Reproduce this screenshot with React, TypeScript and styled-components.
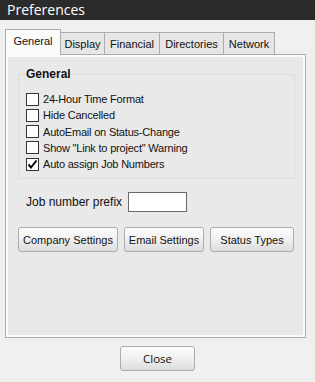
import styled, { createGlobalStyle } from "styled-components";

const GlobalStyle = createGlobalStyle`
  html, body {
    margin: 0;
    padding: 0;
    background: #f0f0f0;
  }
  * {
    box-sizing: border-box;
  }
`;

const Window = styled.div`
  width: 315px;
  height: 382px;
  background: #f0f0f0;
  display: flex;
  flex-direction: column;
  font-family: "Liberation Sans", Arial, sans-serif;
  font-size: 11px;
  color: #111;
`;

const TitleBar = styled.div`
  height: 20px;
  background: #2b2b2b;
  color: #fff;
  font-family: "Open Sans", "Noto Sans", sans-serif;
  font-size: 14px;
  line-height: 20px;
  padding-left: 7px;
`;

const Body = styled.div`
  padding: 9px 9px 0 5px;
  display: flex;
  flex-direction: column;
`;

const TabRow = styled.div`
  display: flex;
  align-items: flex-end;
  height: 26px;
  position: relative;
  z-index: 1;
  margin-bottom: -1px;
`;

const Tab = styled.div<{ $active?: boolean; $w: number }>`
  width: ${(p) => p.$w}px;
  height: ${(p) => (p.$active ? "26px" : "23px")};
  padding-top: 4px;
  margin-left: -1px;
  border: 1px solid #acacac;
  border-bottom: ${(p) => (p.$active ? "none" : "1px solid #acacac")};
  background: ${(p) => (p.$active ? "#fbfbfb" : "#e6e6e6")};
  line-height: 15px;
  text-align: center;
  &:first-child {
    margin-left: 0;
  }
`;

const Panel = styled.div`
  height: 284px;
  border: 1px solid #acacac;
  background: #e9e9e9;
  box-shadow: inset 0 0 0 2px #fbfbfb;
  padding: 12px 10px 0 12px;
  display: flex;
  flex-direction: column;
`;

const Group = styled.fieldset`
  margin: 0;
  height: 112px;
  border: 1px solid #dddddd;
  padding: 10px 0 0 7px;
  display: flex;
  flex-direction: column;
`;

const Legend = styled.legend`
  font-weight: bold;
  font-size: 12px;
  padding: 0;
  margin-left: 0;
  color: #111;
`;

const CheckRow = styled.label`
  display: flex;
  align-items: center;
  height: 16.25px;
  gap: 4px;
  letter-spacing: -0.2px;
`;

const Box = styled.span`
  width: 13px;
  height: 13px;
  border: 1px solid #333;
  background: #fff;
  display: flex;
  align-items: center;
  justify-content: center;
`;

const PrefixRow = styled.div`
  display: flex;
  align-items: center;
  gap: 6px;
  margin: 13px 0 0 8px;
  font-size: 12px;
`;

const PrefixInput = styled.div`
  width: 59px;
  height: 20px;
  border: 1px solid #6a6a6a;
  background: #fff;
`;

const ButtonRow = styled.div`
  display: flex;
  gap: 6px;
  margin-top: 15px;
`;

const Button = styled.div<{ $w: number }>`
  width: ${(p) => p.$w}px;
  height: 25px;
  border: 1px solid #acacac;
  border-radius: 3px;
  background: linear-gradient(#fdfdfd 0%, #f0f0f0 50%, #dcdcdc 100%);
  display: flex;
  align-items: center;
  justify-content: center;
`;

const Footer = styled.div`
  display: flex;
  justify-content: center;
  padding-top: 8px;
`;

const CloseButton = styled(Button)`
  font-family: "Open Sans", "Noto Sans", sans-serif;
  font-size: 11.5px;
`;

const Check = () => (
  <svg width="11" height="11" viewBox="0 0 11 11">
    <path d="M1.5 5.5 L4 8.5 L9.5 1.5" fill="none" stroke="#000" strokeWidth="2" />
  </svg>
);

const tabs = [
  { label: "General", w: 56 },
  { label: "Display", w: 45 },
  { label: "Financial", w: 56 },
  { label: "Directories", w: 65 },
  { label: "Network", w: 52 },
];

const options = [
  { label: "24-Hour Time Format", on: false },
  { label: "Hide Cancelled", on: false },
  { label: "AutoEmail on Status-Change", on: false },
  { label: 'Show "Link to project" Warning', on: false },
  { label: "Auto assign Job Numbers", on: true },
];

export default function App() {
  return (
    <Window>
      <GlobalStyle />
      <TitleBar>Preferences</TitleBar>
      <Body>
        <TabRow>
          {tabs.map((t, i) => (
            <Tab key={t.label} $w={t.w} $active={i === 0}>
              {t.label}
            </Tab>
          ))}
        </TabRow>
        <Panel>
          <Group>
            <Legend>General</Legend>
            {options.map((o) => (
              <CheckRow key={o.label}>
                <Box>{o.on && <Check />}</Box>
                {o.label}
              </CheckRow>
            ))}
          </Group>
          <PrefixRow>
            Job number prefix
            <PrefixInput />
          </PrefixRow>
          <ButtonRow>
            <Button $w={100}>Company Settings</Button>
            <Button $w={80}>Email Settings</Button>
            <Button $w={84}>Status Types</Button>
          </ButtonRow>
        </Panel>
      </Body>
      <Footer>
        <CloseButton $w={75}>Close</CloseButton>
      </Footer>
    </Window>
  );
}
